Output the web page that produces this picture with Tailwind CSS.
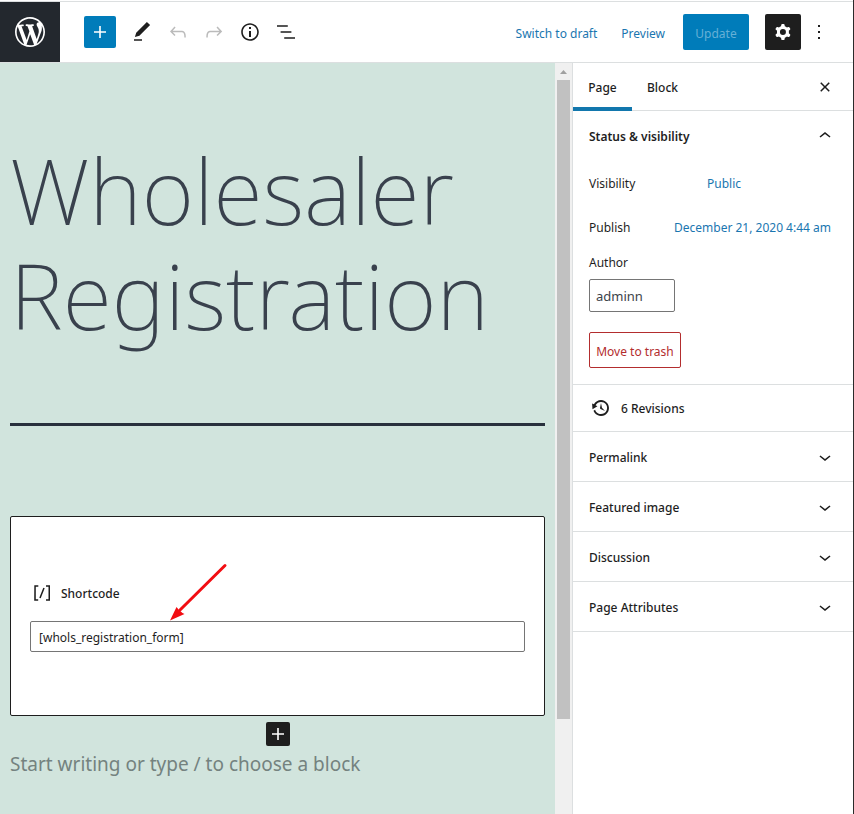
<!DOCTYPE html>
<html lang="en">
<head>
<meta charset="utf-8">
<meta name="viewport" content="width=device-width, initial-scale=1">
<title>Edit Page</title>
<script src="https://cdn.jsdelivr.net/npm/@tailwindcss/browser@4"></script>
</head>
<body class="flex min-h-screen flex-col border-r border-[#2b2b2b] bg-white pt-px font-['Noto_Sans',sans-serif] text-xs leading-5 text-[#1e1e1e]">
<header class="flex h-[62px] items-center border-y border-[#dcdfe0]">
  <a href="#" aria-label="View pages" class="flex h-[60px] w-[60px] items-center justify-center bg-[#23282e]">
    <svg class="h-[30px] w-[30px] fill-white" viewBox="0 0 20 20"><path d="M20 10c0-5.51-4.49-10-10-10C4.48 0 0 4.49 0 10c0 5.52 4.48 10 10 10 5.51 0 10-4.48 10-10zM7.78 15.37L4.37 6.22c.55-.02 1.17-.08 1.17-.08.5-.06.44-1.13-.06-1.11 0 0-1.45.11-2.37.11-.18 0-.37 0-.58-.01C4.12 2.69 6.87 1.11 10 1.11c2.33 0 4.45.87 6.05 2.34-.68-.11-1.65.39-1.65 1.58 0 .74.45 1.36.9 2.1.35.61.55 1.36.55 2.46 0 1.49-1.4 5-1.4 5l-3.03-8.37c.54-.02.82-.17.82-.17.5-.05.44-1.25-.06-1.22 0 0-1.44.12-2.38.12-.87 0-2.33-.12-2.33-.12-.5-.03-.56 1.2-.06 1.22l.92.08 1.26 3.41zM17.41 10c.24-.64.74-1.87.43-4.25.7 1.29 1.05 2.71 1.05 4.25 0 3.29-1.73 6.24-4.4 7.78.97-2.59 1.94-5.2 2.92-7.78zM6.1 18.09C3.12 16.65 1.11 13.53 1.11 10c0-1.3.23-2.48.72-3.59C3.25 10.3 4.67 14.2 6.1 18.09zm4.03-6.63l2.58 6.98c-.86.29-1.76.45-2.71.45-.79 0-1.57-.11-2.29-.33.81-2.38 1.62-4.74 2.42-7.1z"/></svg>
  </a>
  <div class="flex items-center pl-6">
    <button aria-label="Add block" class="mr-2 flex h-8 w-8 items-center justify-center rounded-xs bg-[#007cba]"><svg class="h-6 w-6 fill-white" viewBox="0 0 24 24"><path d="M18 11.2h-5.2V6h-1.6v5.2H6v1.6h5.2V18h1.6v-5.2H18z"/></svg></button>
    <button aria-label="Tools" class="flex h-9 w-9 items-center justify-center"><svg class="h-6 w-6 fill-[#1e1e1e]" viewBox="0 0 24 24"><path d="M20.1 5.1L16.9 2 6.2 12.7l-1.3 4.4 4.5-1.3L20.1 5.1zM4 20.8h8v-1.5H4v1.5z"/></svg></button>
    <button aria-label="Undo" class="flex h-9 w-9 items-center justify-center"><svg class="h-6 w-6 fill-[#bbbbbb]" viewBox="0 0 24 24"><path d="M18.3 11.7c-.6-.6-1.4-.9-2.3-.9H6.7l2.9-3.3-1.1-1-4.5 5L8.5 16l1-1-2.7-2.7H16c.5 0 .9.2 1.3.5 1 1 1 3.4 1 4.5v.3h1.5v-.2c0-1.5 0-4.3-1.5-5.7z"/></svg></button>
    <button aria-label="Redo" class="flex h-9 w-9 items-center justify-center"><svg class="h-6 w-6 fill-[#bbbbbb]" viewBox="0 0 24 24"><path d="M15.6 6.5l-1.1 1 2.9 3.3H8c-.9 0-1.7.3-2.3.9-1.4 1.5-1.4 4.2-1.4 5.6v.2h1.5v-.3c0-1.1 0-3.5 1-4.5.3-.3.7-.5 1.3-.5h9.2L14.5 15l1.1 1.1 4.6-4.6-4.6-5z"/></svg></button>
    <button aria-label="Details" class="flex h-9 w-9 items-center justify-center"><svg class="h-6 w-6 fill-[#1e1e1e]" viewBox="0 0 24 24"><path d="M12 3.2c-4.8 0-8.8 3.9-8.8 8.8 0 4.8 3.9 8.8 8.8 8.8 4.8 0 8.8-3.9 8.8-8.8 0-4.8-4-8.8-8.8-8.8zm0 16c-4 0-7.2-3.3-7.2-7.2C4.8 8 8 4.8 12 4.8s7.2 3.3 7.2 7.2c0 4-3.2 7.2-7.2 7.2zM11 17h2v-6h-2v6zm0-8h2V7h-2v2z"/></svg></button>
    <button aria-label="Outline" class="flex h-9 w-9 items-center justify-center"><svg class="h-6 w-6 fill-[#1e1e1e]" viewBox="0 0 24 24"><path d="M13.8 5.2H3v1.5h10.8V5.2zm-3.6 12v1.5H21v-1.5H10.2zm7.2-6H6.6v1.5h10.8v-1.5z"/></svg></button>
  </div>
  <div class="ml-auto flex items-center pr-4 text-[#1a76b0]">
    <button class="mr-6 pt-1">Switch to draft</button>
    <button class="mr-[18px] pt-1">Preview</button>
    <button class="mr-4 h-9 w-[66px] rounded-xs bg-[#007cba] pt-1 text-[#66b0d6]">Update</button>
    <button aria-label="Settings" class="flex h-9 w-9 items-center justify-center rounded-xs bg-[#1e1e1e]"><svg class="h-6 w-6 fill-white" viewBox="0 0 24 24"><path fill-rule="evenodd" d="M10.289 4.836A1 1 0 0111.275 4h1.306a1 1 0 01.987.836l.244 1.466c.787.26 1.503.679 2.108 1.218l1.393-.522a1 1 0 011.216.437l.653 1.13a1 1 0 01-.23 1.273l-1.148.944a6.025 6.025 0 010 2.435l1.149.946a1 1 0 01.23 1.272l-.653 1.13a1 1 0 01-1.216.437l-1.394-.522c-.605.54-1.32.958-2.108 1.218l-.244 1.466a1 1 0 01-.987.836h-1.306a1 1 0 01-.986-.836l-.244-1.466a5.995 5.995 0 01-2.108-1.218l-1.394.522a1 1 0 01-1.217-.436l-.653-1.131a1 1 0 01.23-1.272l1.149-.946a6.026 6.026 0 010-2.435l-1.148-.944a1 1 0 01-.23-1.272l.653-1.131a1 1 0 011.217-.437l1.393.522a5.994 5.994 0 012.108-1.218l.244-1.466zM14.929 12a3 3 0 11-6 0 3 3 0 016 0z"/></svg></button>
    <button aria-label="Options" class="flex h-9 w-9 items-center justify-center"><svg class="h-6 w-6 fill-[#1e1e1e]" viewBox="0 0 24 24"><path d="M13 19h-2v-2h2v2zm0-6h-2v-2h2v2zm0-6h-2V5h2v2z"/></svg></button>
  </div>
</header>
<div class="flex flex-1">
  <main class="min-w-0 flex-1 bg-[#d1e4dd] px-[10px] pt-[75px]">
    <h1 class="text-[90px] leading-[105px] font-[250] text-[#39414d]">Wholesaler Registration</h1>
    <hr class="mt-[75px] border-t-3 border-[#28303d]">
    <section class="relative mt-[90px] flex h-[200px] flex-col justify-center rounded-xs border border-[#1e1e1e] bg-white px-[19px]">
      <label for="shortcode" class="mb-4 flex items-center gap-[7px] font-medium">
        <svg class="h-6 w-6 fill-[#1e1e1e]" viewBox="0 0 24 24"><path d="M16 4.2v1.5h2.5v12.5H16v1.5h4V4.2h-4zM4.2 19.8h4v-1.5H5.8V5.8h2.5V4.2h-4l-.1 15.6zm5.1-3.1l1.4.6 4-10-1.4-.6-4 10z"/></svg>
        <span class="pt-0.5">Shortcode</span></label>
      <input id="shortcode" type="text" value="[whols_registration_form]" class="h-[31px] w-full rounded-xs border border-[#757575] bg-white px-2 pt-0.5 text-[#1e1e1e]">
      <svg class="absolute top-[46px] left-[158px] h-[60px] w-[60px]" viewBox="0 0 60 60"><path d="M56 2.500L11 47" stroke="#f20d12" stroke-width="3" stroke-linecap="round"/><path d="M1 57.500L7.500 44L10 47L13.500 50L15.500 51Z" fill="#f20d12"/></svg>
    </section>
    <button aria-label="Add block" class="mx-auto mt-1.5 flex h-6 w-6 items-center justify-center rounded-xs bg-[#1e1e1e]"><svg class="h-6 w-6 fill-white" viewBox="0 0 24 24"><path d="M18 11.2h-5.2V6h-1.6v5.2H6v1.6h5.2V18h1.6v-5.2H18z"/></svg></button>
    <p class="mt-1 text-[19px] leading-7 text-[#74827f]">Start writing or type / to choose a block</p>
  </main>
  <div aria-hidden="true" class="flex w-[17px] flex-col items-center bg-[#f0f0f0]">
    <svg class="h-[17px] w-[17px] fill-[#a0a0a0]" viewBox="0 0 17 17"><path d="M5 11h7L8.500 7z"/></svg>
    <div class="h-[639px] w-[13px] bg-[#c1c1c1]"></div>
  </div>
  <aside class="w-[281px] border-l border-[#dcdfe0]">
    <div class="flex h-12 items-stretch border-b border-[#dcdfe0] font-medium">
      <button class="-mb-px w-[59px] border-b-4 border-[#1277ad] pt-1.5">Page</button>
      <button class="ml-px px-[14px] pt-0.5">Block</button>
      <button aria-label="Close settings" class="mr-4 ml-auto"><svg class="h-6 w-6 fill-[#1e1e1e]" viewBox="0 0 24 24"><path d="M12 13.060l3.712 3.713 1.061-1.060L13.061 12l3.712-3.712-1.060-1.060L12 10.938 8.288 7.227l-1.061 1.060L10.939 12l-3.712 3.712 1.060 1.061L12 13.061z"/></svg></button>
    </div>
    <section class="border-b border-[#dcdfe0] px-4 pb-4">
      <button class="flex h-[50px] w-full items-center justify-between font-semibold"><span class="pt-0.5">Status &amp; visibility</span><svg class="h-6 w-6 fill-[#1e1e1e]" viewBox="0 0 24 24"><path d="M6.500 12.400L12 8l5.500 4.400-.9 1.200L12 10l-4.500 3.600-1-1.200z"/></svg></button>
      <div class="flex h-11 items-center pt-0.5"><span class="w-[118px]">Visibility</span><button class="text-[#1a76b0]">Public</button></div>
      <div class="flex h-11 items-center justify-between pt-0.5 pr-1.5"><span>Publish</span><button class="text-[#1a76b0]">December 21, 2020 4:44 am</button></div>
      <label for="author" class="mt-1 block">Author</label>
      <select id="author" class="mt-1.5 block h-[33px] w-[86px] appearance-none rounded-xs border border-[#757575] bg-white px-1.5 text-[13px] text-[#3c434a]"><option>adminn</option></select>
      <button class="mt-5 block h-9 w-[92px] rounded-xs border border-[#b32d2e] pt-1 text-[#b32d2e]">Move to trash</button>
    </section>
    <button class="flex h-[47px] w-full items-center gap-2.5 border-b border-[#dcdfe0] px-[18px] font-medium"><svg class="h-5 w-5 fill-[#1e1e1e]" viewBox="0 0 20 20"><path d="M13.650 2.880c3.930 2.010 5.480 6.840 3.470 10.770s-6.830 5.480-10.770 3.470c-1.870-.96-3.200-2.560-3.860-4.400l1.640-1.030c.45 1.570 1.520 2.950 3.080 3.760 3.010 1.540 6.690.35 8.230-2.660 1.550-3.010.36-6.690-2.650-8.240C9.780 3.010 6.100 4.200 4.560 7.210l1.880.97-4.950 3.080-.39-5.820 1.780.91C4.900 2.400 9.750.89 13.650 2.880zm-4.360 7.830C9.110 10.530 9 10.280 9 10c0-.07.03-.12.04-.19h-.01L10 5l.97 4.810L14 13l-4.500-2.120.02-.02c-.08-.04-.16-.09-.23-.15z"/></svg><span class="pt-0.5">6 Revisions</span></button>
    <button class="flex h-[50px] w-full items-center justify-between border-b border-[#dcdfe0] px-4 font-medium"><span class="pt-0.5">Permalink</span><svg class="h-6 w-6 fill-[#1e1e1e]" viewBox="0 0 24 24"><path d="M17.500 11.600L12 16l-5.500-4.400.9-1.200L12 14l4.500-3.600 1 1.200z"/></svg></button>
    <button class="flex h-[50px] w-full items-center justify-between border-b border-[#dcdfe0] px-4 font-medium"><span class="pt-0.5">Featured image</span><svg class="h-6 w-6 fill-[#1e1e1e]" viewBox="0 0 24 24"><path d="M17.500 11.600L12 16l-5.500-4.400.9-1.200L12 14l4.500-3.600 1 1.200z"/></svg></button>
    <button class="flex h-[50px] w-full items-center justify-between border-b border-[#dcdfe0] px-4 font-medium"><span class="pt-0.5">Discussion</span><svg class="h-6 w-6 fill-[#1e1e1e]" viewBox="0 0 24 24"><path d="M17.500 11.600L12 16l-5.500-4.400.9-1.200L12 14l4.500-3.600 1 1.200z"/></svg></button>
    <button class="flex h-[50px] w-full items-center justify-between border-b border-[#dcdfe0] px-4 font-medium"><span class="pt-0.5">Page Attributes</span><svg class="h-6 w-6 fill-[#1e1e1e]" viewBox="0 0 24 24"><path d="M17.500 11.600L12 16l-5.500-4.400.9-1.200L12 14l4.500-3.600 1 1.200z"/></svg></button>
  </aside>
</div>
</body>
</html>
